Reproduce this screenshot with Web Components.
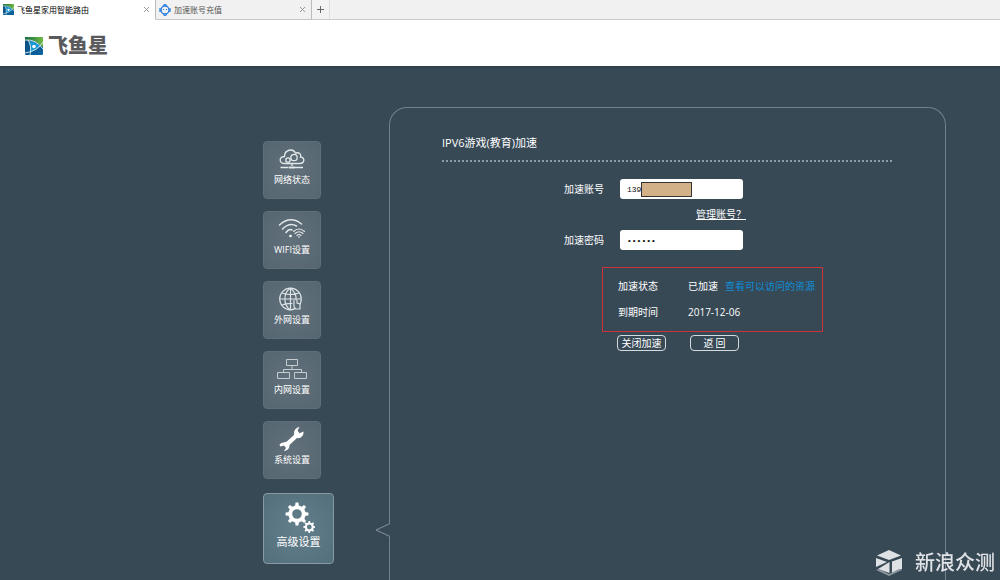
<!DOCTYPE html>
<html lang="zh-CN">
<head>
<meta charset="utf-8">
<title>飞鱼星家用智能路由</title>
<style>
html { height: 100%; }
body {
  margin: 0; min-height: 100%; display: flex;
  font-family: "Open Sans", "Noto Sans CJK SC", sans-serif;
  font-size: 10px; line-height: 16px; color: #fff; background: #384956;
}
router-page { flex: 1; }
</style>
</head>
<body>
<router-page></router-page>
<script>
const define = (name, html, setup) => customElements.define(name, class extends HTMLElement {
  connectedCallback() {
    if (this.shadowRoot) return;
    this.attachShadow({ mode: 'open' }).innerHTML = html;
    if (setup) setup(this, this.shadowRoot);
  }
});

const gear = (cx, cy, r, hole, teeth) => {
  const p = [];
  for (let i = 0; i < teeth; i++) {
    const a = i * 2 * Math.PI / teeth;
    for (const [o, k] of [[-.27, .76], [-.16, 1], [.16, 1], [.27, .76]]) {
      const t = a + o * 2 * Math.PI / teeth;
      p.push((cx + r * k * Math.sin(t)).toFixed(2) + ' ' + (cy - r * k * Math.cos(t)).toFixed(2));
    }
  }
  return `<path fill="#fff" fill-rule="evenodd" d="M${p.join('L')}ZM${cx - hole} ${cy}a${hole} ${hole} 0 1 0 ${hole * 2} 0a${hole} ${hole} 0 1 0 ${-hole * 2} 0Z"/>`;
};

const icons = {
  cloud: `<svg width="28" height="24" viewBox="0 0 28 24" fill="none" stroke="#e3e8ea" stroke-width="1.3"><path d="M7 16.5C.5 16.5 .8 9.500 6.500 9.500C6.500 2.500 15 1 17.500 6C21.500 5 23.500 7.500 22.500 10C27.500 10.500 26.500 16.500 22 16.500Z"/><circle cx="10" cy="13" r="2.200"/><circle cx="16" cy="10.500" r="3.200"/><path d="M14 17v2M2.500 20.500h8M17 20.500h8"/><path d="M11 20.500h6" stroke-width="2"/></svg>`,
  wifi: `<svg width="28" height="24" viewBox="0 0 28 24" fill="none" stroke="#e3e8ea" stroke-width="1.500" stroke-linecap="round"><path d="M1.500 8Q12.500-2 23.500 7M4.500 12Q11.500 5 18.500 9M8 15.500Q11 11.500 14 13"/><circle cx="12.500" cy="19" r="1.300" fill="#fff" stroke="none"/><path stroke-width="1.100" d="M15.500 14.500Q21 9.500 26.500 14.500M17 16.500Q21 13 25 16.500M19 18.500Q21 16.500 23 18.500"/><circle cx="21" cy="20" r=".8" fill="#fff" stroke="none"/></svg>`,
  globe: `<svg width="28" height="24" viewBox="0 0 28 24" fill="none" stroke="#dce2e5" stroke-width="1.200"><circle cx="12.500" cy="12" r="10.800"/><path d="M12.500 1v22M2 12h21M4 6q8.500 3 17 0M4 18q5 -2 10.500-1.500M12.500 1C5 6 5 18 12.500 23M12.500 1C17 5 18.500 9 18 13"/><path d="M16 13v6.500l2 2.500h4v-5l-3-1v-3" fill="#5d6c76"/></svg>`,
  lan: `<svg width="32" height="24" viewBox="0 0 32 24" fill="none" stroke="#c4ccd0"><path d="M10.500 2.500h11v6h-11ZM16 8.500v4M7.500 15.500v-3h18v3M1.500 15.500h12v6h-12ZM18.500 15.500h12v6h-12Z"/></svg>`,
  wrench: `<svg width="28" height="26" viewBox="0 0 28 26"><path fill="#fff" d="M1.500 18.500C4 16 7 16.500 8.800 15.500L16 9C15.500 5 17.500 1.500 21.500 1L19.500 4.500L21.500 7.300L25.500 5.500C26 10 22.500 12.800 19 12L11.500 19C11.500 22 10 24.700 6 25L8 22L6 19.500L2.300 20.500Z"/></svg>`,
  gears: `<svg width="32" height="32" viewBox="0 0 32 32">${gear(14, 13, 11.5, 4.8, 8)}${gear(26.3, 26, 6, 2.4, 8)}</svg>`
};

define('star-logo', `<style>:host{display:block;line-height:0}svg{width:100%;height:100%}</style>
<svg viewBox="0 0 18 18"><defs><linearGradient id="g" x2="1"><stop stop-color="#176d43"/><stop offset="1" stop-color="#72bb45"/></linearGradient><linearGradient id="b" x2="1" y2="1"><stop stop-color="#0a4c7c"/><stop offset="1" stop-color="#0d65a2"/></linearGradient></defs>
<rect width="18" height="18" rx="1" fill="url(#b)"/><path d="M0 0H18V10Q10 3 0 3Z" fill="url(#g)"/>
<path d="M4 4Q11 4 15 9Q11 14 5 15Q6 9 4 4Z" fill="#1697d4"/><path d="M0 3Q11 2 18 12M18 5Q13 14 0 16M3 3Q7 9 5 18" fill="none" stroke="#dcebf2" stroke-width=".9"/><circle cx="9" cy="9.500" r="1.800" fill="#fff"/></svg>`);

define('browser-tab', `<style>
:host{display:flex;align-items:center;box-sizing:border-box;width:156px;height:20px;padding:0 5px 0 3px;gap:3px;color:#555;background:#f1f1f1;border-right:1px solid #bbb;border-bottom:1px solid #c8c8c8}
:host([active]){color:#000;background:#fff;border-bottom-color:#fff}
span{flex:1;font-size:8px;white-space:nowrap}
button{display:flex;padding:0;border:0;background:none}
</style><slot name="icon"></slot><span><slot></slot></span><button aria-label="关闭标签页"><svg width="7" height="7" stroke="#999"><path d="M1 1L6 6M6 1L1 6"/></svg></button>`);

define('browser-tabs', `<style>
:host{display:flex;height:19px;background:#f1f1f1;border-bottom:1px solid #ccc}
star-logo{width:11px;height:11px}
.add{display:flex;align-items:center;justify-content:center;width:18px;padding:0;border:0;border-right:1px solid #ddd;background:#f3f3f3}
</style>
<browser-tab active><star-logo slot="icon"></star-logo>飞鱼星家用智能路由</browser-tab>
<browser-tab><svg slot="icon" width="12" height="12" fill="none" stroke="#2b7fe0"><circle cx="6" cy="6" r="4" stroke-width="1.500"/><path d="M4 1.500L6 .6L8 1.500M4 10.500L6 11.400L8 10.500M1 4v4M11 4v4" stroke-width="1.300"/><path d="M4.500 5v1M7.500 5v1" stroke-width="1.200"/></svg>加速账号充值</browser-tab>
<button class="add" aria-label="新标签页"><svg width="9" height="9" stroke="#666"><path d="M4.500 1v7M1 4.500h7"/></svg></button>`);

define('brand-header', `<style>
:host{display:flex;align-items:center;gap:5px;height:46px;padding:6px 25px 0;box-sizing:border-box;background:#fff;color:#5a5a5c}
star-logo{width:18px;height:18px}
h1{margin:0;font-size:20px;line-height:24px;font-weight:900}
</style><star-logo></star-logo><h1>飞鱼星</h1>`);

define('menu-tile', `<style>
:host{display:block;width:58px}
:host([active]){width:71px;margin-top:2px}
a{display:flex;flex-direction:column;align-items:center;box-sizing:border-box;height:58px;padding-top:5px;gap:1px;border:1px solid #5f6f79;border-radius:4px;background:radial-gradient(circle,#61707a,#566670);color:#fff;font-size:9px;line-height:16px;text-decoration:none}
.icon{display:flex;align-items:center;height:24px}
:host([active]) a{height:71px;padding-top:7px;border-color:#8799a2;background:radial-gradient(circle,#637f8b,#546f7c);font-size:11px}
:host([active]) .icon{height:32px}
</style><a href="#"><span class="icon"></span><slot></slot></a>`, (el, root) => {
  root.querySelector('.icon').innerHTML = icons[el.getAttribute('icon')];
});

define('side-menu', `<style>:host{display:block;width:71px}nav{display:flex;flex-direction:column;gap:12px}</style>
<nav><menu-tile icon="cloud">网络状态</menu-tile><menu-tile icon="wifi">WIFI设置</menu-tile><menu-tile icon="globe">外网设置</menu-tile><menu-tile icon="lan">内网设置</menu-tile><menu-tile icon="wrench">系统设置</menu-tile><menu-tile icon="gears" active>高级设置</menu-tile></nav>`);

define('settings-panel', `<style>
:host{display:block;position:relative;box-sizing:border-box;border:1px solid #71828c;border-bottom:0;border-radius:18px 18px 0 0;padding:25px 53px 0 52px}
h2{margin:0;padding-bottom:7px;border-bottom:2px dotted #919da5;font-size:11px;line-height:20px;font-weight:400}
.notch{position:absolute;left:-15px;top:415px}
</style><h2><slot name="title"></slot></h2><slot></slot>
<svg class="notch" width="16" height="14" fill="none"><path d="M15 0V14" stroke="#384956" stroke-width="2"/><path d="M15 .5L1 7L15 13.500" stroke="#84929b"/></svg>`);

define('boost-form', `<style>
:host{display:block;padding:17px 0 0 122px}
form{display:grid;grid-template-columns:40px 123px;column-gap:16px;align-items:center;width:max-content}
label{white-space:nowrap}
.field{position:relative;display:flex}
input{box-sizing:border-box;width:100%;height:20px;padding:0 7px;border:0;border-radius:3px;background:#fff;color:#111;font:8px "Liberation Mono",monospace;outline:0}
.mask{position:absolute;left:21px;top:3px;box-sizing:border-box;width:51px;height:15px;border:1px solid #333;background:#d2b189}
.manage{grid-column:2;justify-self:end;margin-right:-3px;line-height:31px;color:#fff}
.status{display:grid;grid-template-columns:54px max-content;column-gap:16px;row-gap:10px;margin:17px 0 0 38px;padding:10px 7px 11px 15px;border:1px solid #cc3339;width:max-content}
dt,dd{margin:0}
dd a{margin-left:7px;color:#0c8ed6;text-decoration:none}
.actions{display:flex;gap:24px;margin:3px 0 0 53px}
button{box-sizing:border-box;width:49px;height:16px;padding:0;border:1px solid #d4dade;border-radius:4px;background:none;color:#fff;font:10px/14px "Noto Sans CJK SC",sans-serif;white-space:nowrap}
</style>
<form><label for="account">加速账号</label><span class="field"><input id="account" type="text" value="139"><span class="mask"></span></span>
<a class="manage" href="#">管理账号？</a>
<label for="password">加速密码</label><span class="field"><input id="password" type="password" value="123456"></span></form>
<dl class="status"><dt>加速状态</dt><dd>已加速<a href="#">查看可以访问的资源</a></dd><dt>到期时间</dt><dd>2017-12-06</dd></dl>
<div class="actions"><button type="button">关闭加速</button><button type="button">返 回</button></div>`);

define('review-mark', `<style>
:host{position:fixed;right:5px;bottom:3px;display:flex;align-items:center;gap:12px;color:#dfe3e6;font-size:20px;line-height:26px;font-weight:500}
</style><svg width="28" height="28"><g fill="#dfe2e4"><path d="M2 6.500L14 1L26 6.500L14 11Z"/><path d="M1 9L12 13L1 18Z"/><path d="M17 12.500L27 9V20L17 24Z"/><path d="M3 20L14.500 13V24Z"/></g><path d="M1 21L14 27L27 21L24 20L14 25L4 20Z" fill="#8b969e"/></svg><span>新浪众测</span>`);

define('router-page', `<style>
:host{display:flex;flex-direction:column;min-width:0}
main{flex:1;display:flex;gap:55px;padding:41px 54px 0 263px;background:linear-gradient(#2c3d49,#384956 3px)}
side-menu{flex:none;margin-top:34px}
settings-panel{flex:1;min-width:0}
</style><browser-tabs></browser-tabs><brand-header></brand-header>
<main><side-menu></side-menu><settings-panel><span slot="title">IPV6游戏(教育)加速</span><boost-form></boost-form></settings-panel></main>
<review-mark></review-mark>`);
</script>
</body>
</html>
